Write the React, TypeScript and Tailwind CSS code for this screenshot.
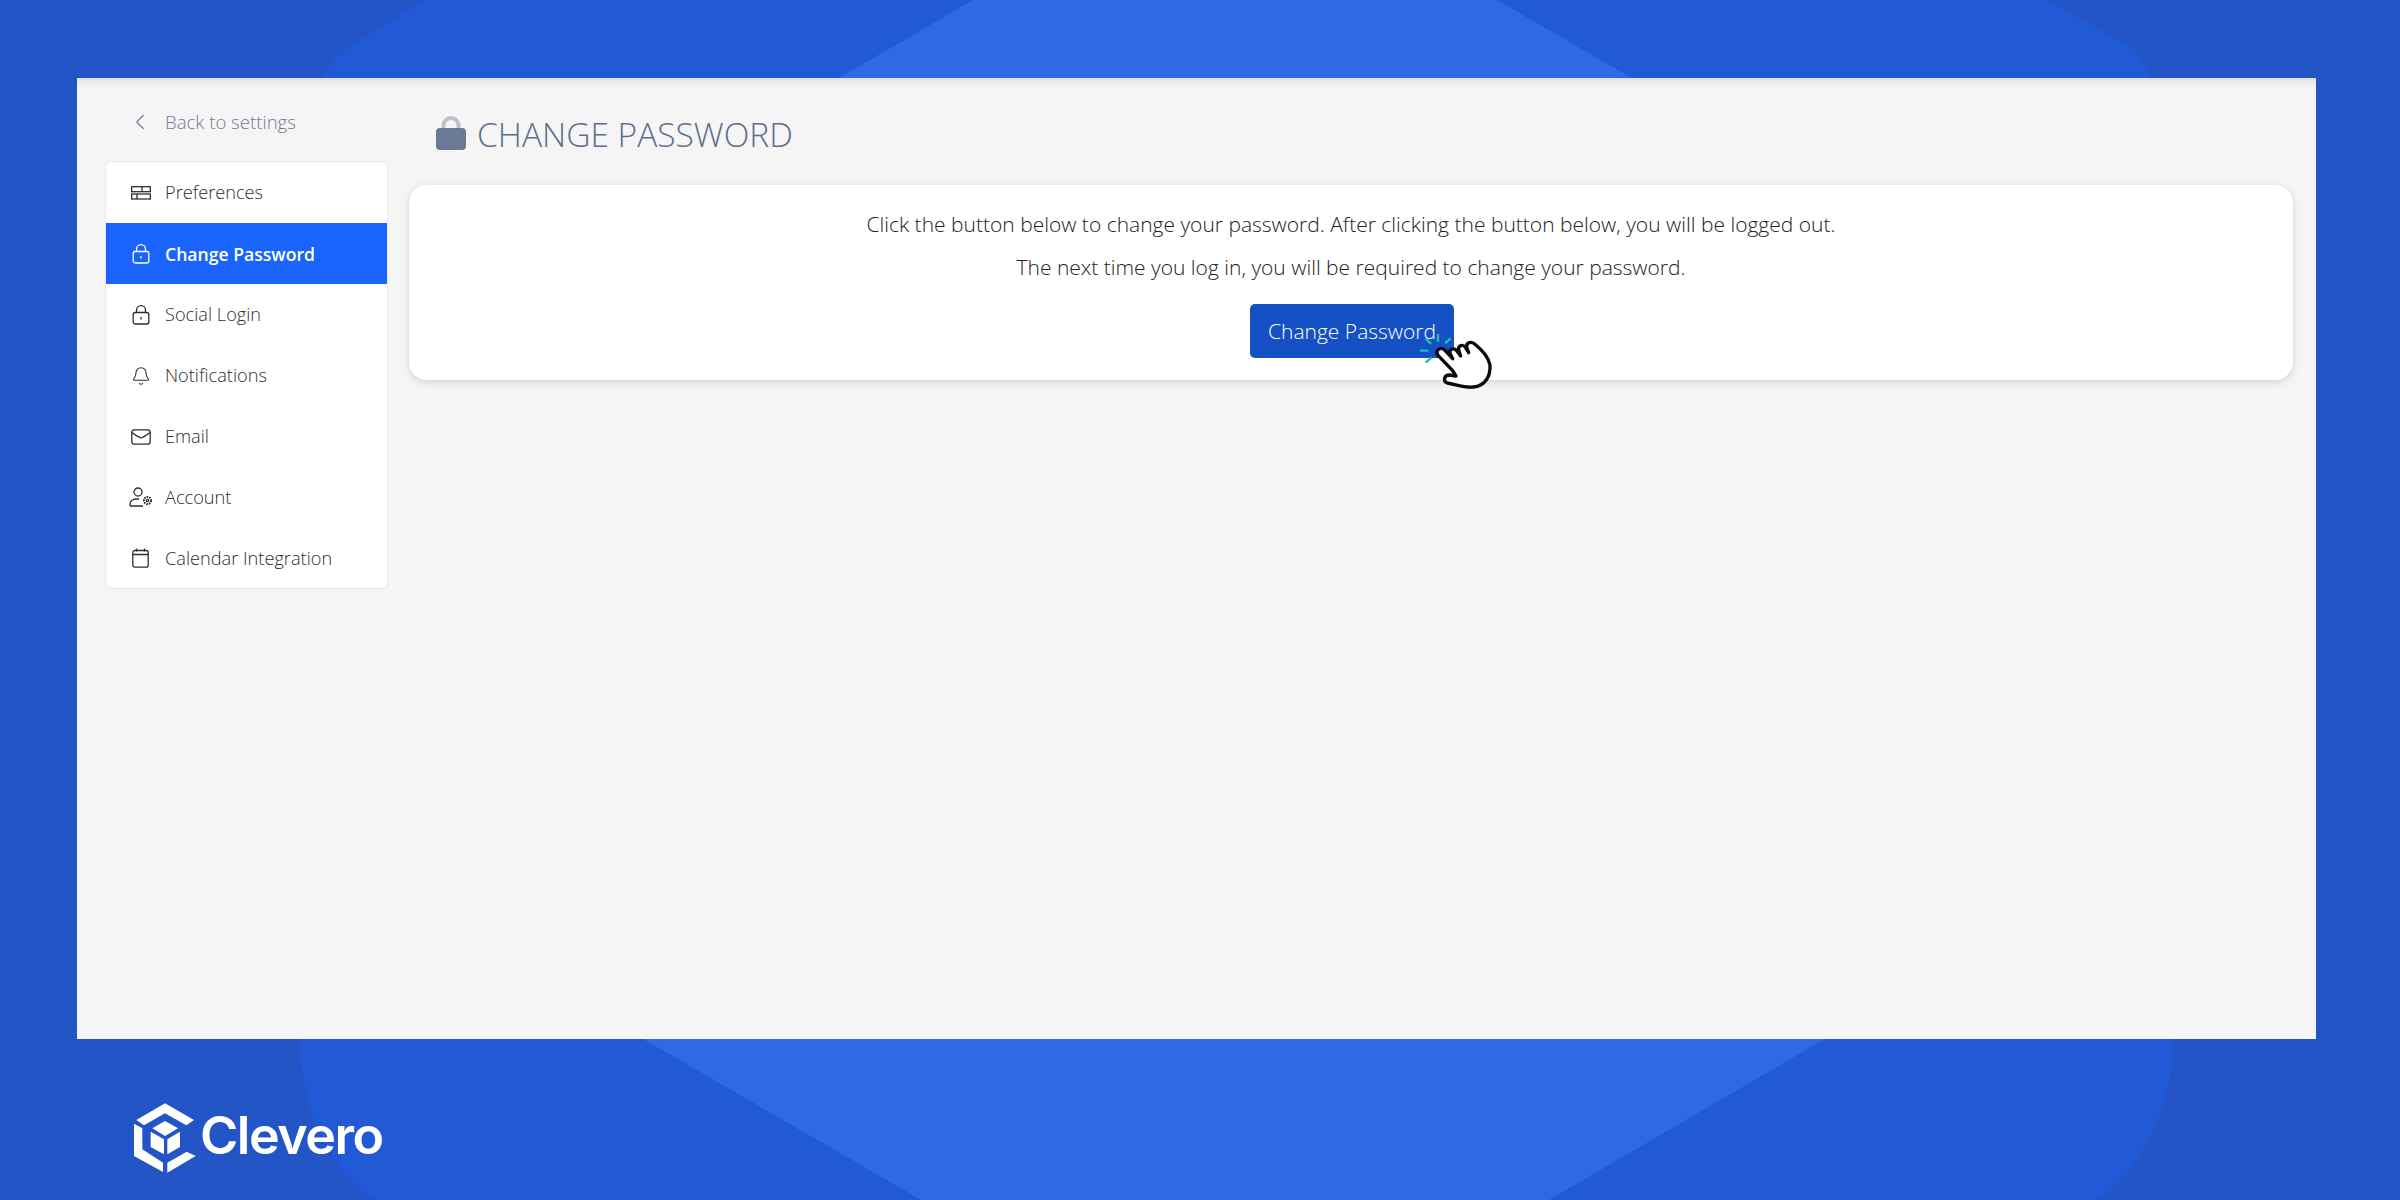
import React from "react";
import { Bell, ChevronLeft } from "lucide-react";

const s = { fill: "none", stroke: "currentColor", strokeWidth: 1.3 };

function PrefIcon() {
  return (
    <svg width="20" height="14" viewBox="0 0 20 14" {...s}>
      <rect x="0.7" y="0.7" width="18.6" height="5" />
      <rect x="0.7" y="8" width="18.6" height="5" />
      <path d="M11 .7v5M6 8v5" />
    </svg>
  );
}
function LockIcon() {
  return (
    <svg width="18" height="20" viewBox="0 0 18 20" {...s}>
      <rect x="1.2" y="7.5" width="15.6" height="11.5" rx="2" />
      <path d="M4.5 7.5V5.2a4.5 4.5 0 0 1 9 0v2.3" />
      <path d="M9 12v2.4" />
    </svg>
  );
}
function MailIcon() {
  return (
    <svg width="20" height="16" viewBox="0 0 20 16" {...s}>
      <rect x="0.8" y="0.8" width="18.4" height="14.4" rx="2.5" />
      <path d="M1 3.5C4 6 7 8 10 9c3-1 6-3 9-5.5" />
    </svg>
  );
}
function AccountIcon() {
  return (
    <svg width="24" height="20" viewBox="0 0 24 20" {...s}>
      <circle cx="9" cy="5" r="4" />
      <path d="M1 19v-2c0-3 3-5 7-5h2M1 19h13" />
      <circle cx="18.5" cy="13.5" r="3.6" strokeDasharray="1.6 1" strokeWidth="2" />
      <circle cx="18.5" cy="13.5" r="1.2" />
    </svg>
  );
}
function CalIcon() {
  return (
    <svg width="17" height="20" viewBox="0 0 17 20" {...s}>
      <rect x="0.8" y="2.5" width="15.4" height="16.7" rx="2" />
      <path d="M1 6.5h15M4.5 .5v3M12.5 .5v3" />
    </svg>
  );
}

const items = [
  { label: "Preferences", icon: <PrefIcon /> },
  { label: "Change Password", icon: <LockIcon />, active: true },
  { label: "Social Login", icon: <LockIcon /> },
  { label: "Notifications", icon: <Bell size={20} strokeWidth={1.3} /> },
  { label: "Email", icon: <MailIcon /> },
  { label: "Account", icon: <AccountIcon /> },
  { label: "Calendar Integration", icon: <CalIcon /> },
];

function Logo() {
  return (
    <svg width="70" height="80" viewBox="0 0 210 240" className="shrink-0 text-white" fill="currentColor">
      <path d="M118 22 205 72 182 88 118 52 55 88 32 72Z" transform="translate(-25 0)" />
      <path d="M0 83 25 97V160L87 200V228L0 180Z" />
      <path d="M100 200 158 167 185 180 100 230Z" />
      <path d="M93 75 132 97 93 120 55 97Z" />
      <path d="M50 107 90 130V175L50 153Z" />
      <path d="M138 107 100 130V175L138 153Z" />
    </svg>
  );
}

function Hand() {
  return (
    <svg width="90" height="70" viewBox="0 0 270 210" className="absolute left-[160px] top-[16px]">
      <g stroke="#1fbfae" strokeWidth="7" fill="none">
        <path d="M47 55 63 72M84 42V65M122 55 105 70M30 92H55M47 128 65 112" />
      </g>
      <path
        d="M128 152 84 106C74 92 90 78 104 90L128 116 120 100C116 88 132 82 140 92L152 108 146 90C144 76 158 72 166 82L176 98 170 82C168 66 184 64 194 72 214 88 236 113 240 135 242 168 226 198 190 201 165 204 140 194 112 189 98 184 102 165 118 165L138 168Z"
        fill="#fff"
        stroke="#0a0a0a"
        strokeWidth="10"
        strokeLinejoin="round"
      />
    </svg>
  );
}

export default function App() {
  return (
    <div className="relative flex h-[1200px] w-[2400px] flex-col overflow-hidden bg-[#2455c6] pl-[77px] pt-[78px] font-['Open_Sans','Noto_Sans',sans-serif]">
      <svg width="2400" height="1200" viewBox="0 0 2400 1200" className="absolute left-0 top-0">
        <path
          d="M425 0 350 46Q325 65 318 85L300 1039C300 1110 330 1170 375 1200H2097C2140 1170 2173 1110 2173 1039L2155 85Q2145 60 2128 45L2048 0Z"
          fill="#2159d6"
        />
        <path d="M973 0H1497L1632 78H839Z" fill="#2d6ae3" />
        <path d="M643 1039H1825L1549 1200H921Z" fill="#2d6ae3" />
      </svg>

      <div className="relative flex h-[961px] w-[2239px] shrink-0 gap-[21px] bg-[#f5f5f5] pl-[28px] pr-[23px] shadow-[inset_0_9px_8px_-7px_rgba(0,0,0,0.13)]">
        <aside className="w-[283px] shrink-0">
          <div className="flex h-[83px] items-end gap-[12px] pb-[27px] pl-[22px] text-[18.6px] font-light leading-[24px] text-[#6f7c94]">
            <ChevronLeft size={26} strokeWidth={1.1} className="-mb-[1px]" />
            <span>Back to settings</span>
          </div>
          <nav className="overflow-hidden rounded-[6px] border border-[#e6e7ef] bg-white">
            {items.map((it) => (
              <div
                key={it.label}
                className={
                  it.active
                    ? "-mx-px flex h-[60.9px] items-center bg-[#1a64fb] pt-px text-[17.6px] font-semibold text-white"
                    : "flex h-[60.9px] items-center pt-px text-[18.2px] font-light text-[#2e2e2e]"
                }
              >
                <span className={it.active ? "flex w-[60px] shrink-0 justify-center pl-[11px]" : "flex w-[59px] shrink-0 justify-center pl-[10px]"}>
                  {it.icon}
                </span>
                <span>{it.label}</span>
              </div>
            ))}
          </nav>
        </aside>

        <main className="min-w-0 flex-1">
          <div className="flex h-[107px] items-end gap-[11px] pb-[31px] pl-[27px]">
            <svg width="30" height="34" viewBox="0 0 30 34" className="mb-[4px]">
              <path d="M7.5 14V9.5a7.5 7.5 0 0 1 15 0V14" fill="none" stroke="#bcc1cc" strokeWidth="4" />
              <rect x="0" y="12" width="30" height="22" rx="4" fill="#6b7a94" />
            </svg>
            <h1 className="text-[33.5px] font-light leading-[40px] text-[#5f6e8a]">CHANGE PASSWORD</h1>
          </div>
          <section className="flex h-[195px] flex-col items-center rounded-[18px] bg-white pt-[25px] text-[21px] font-light text-[#222] shadow-[0_2px_8px_rgba(0,0,0,0.14)]">
            <p className="h-[43px] leading-[28px]">
              Click the button below to change your password. After clicking the button below, you will be logged out.
            </p>
            <p className="h-[51px] leading-[28px]">The next time you log in, you will be required to change your password.</p>
            <div className="relative left-[1px]">
              <button className="h-[54px] w-[204px] rounded-[5px] bg-[#1550c5] pt-px text-[21px] font-light text-white">
                Change Password
              </button>
              <Hand />
            </div>
          </section>
        </main>
      </div>

      <div className="relative flex items-end pl-[57px] pt-[57px]">
        <Logo />
        <span className="-ml-[4px] mb-[12px] text-[52px] font-semibold leading-[56px] tracking-[-1.5px] text-white font-['Inter',sans-serif]">
          Clevero
        </span>
      </div>
    </div>
  );
}
